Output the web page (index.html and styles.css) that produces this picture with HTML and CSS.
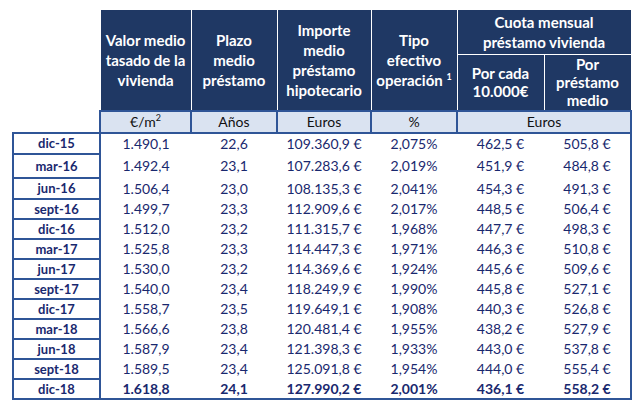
FILE: index.html
```html
<!DOCTYPE html>
<html lang="es">
<head>
<meta charset="utf-8">
<title>Préstamo vivienda</title>
<link rel="stylesheet" href="styles.css">
</head>
<body>
<table class="tbl">
  <colgroup>
    <col class="w-label"><col class="w1"><col class="w2"><col class="w3"><col class="w4"><col class="w5"><col class="w6">
  </colgroup>
  <thead>
    <tr class="hr1">
      <th class="corner" rowspan="2"></th>
      <th class="h" rowspan="2">Valor medio<br>tasado de la<br>vivienda</th>
      <th class="h" rowspan="2">Plazo<br>medio<br>préstamo</th>
      <th class="h" rowspan="2">Importe<br>medio<br>préstamo<br>hipotecario</th>
      <th class="h" rowspan="2">Tipo<br>efectivo<br>operación <sup class="note">1</sup></th>
      <th class="h" colspan="2">Cuota mensual<br>préstamo vivienda</th>
    </tr>
    <tr class="hr2">
      <th class="h sub">Por cada<br>10.000€</th>
      <th class="h sub">Por<br>préstamo<br>medio</th>
    </tr>
    <tr class="units">
      <td class="corner"></td>
      <td class="u">€/m<sup>2</sup></td>
      <td class="u">Años</td>
      <td class="u">Euros</td>
      <td class="u">%</td>
      <td class="u" colspan="2">Euros</td>
    </tr>
  </thead>
  <tbody>
    <tr class="r21"><th class="lbl">dic-15</th><td>1.490,1</td><td>22,6</td><td>109.360,9 €</td><td>2,075%</td><td>462,5 €</td><td class="last">505,8 €</td></tr>
    <tr class="r24"><th class="lbl">mar-16</th><td>1.492,4</td><td>23,1</td><td>107.283,6 €</td><td>2,019%</td><td>451,9 €</td><td class="last">484,8 €</td></tr>
    <tr class="r21"><th class="lbl">jun-16</th><td>1.506,4</td><td>23,0</td><td>108.135,3 €</td><td>2,041%</td><td>454,3 €</td><td class="last">491,3 €</td></tr>
    <tr><th class="lbl">sept-16</th><td>1.499,7</td><td>23,3</td><td>112.909,6 €</td><td>2,017%</td><td>448,5 €</td><td class="last">506,4 €</td></tr>
    <tr><th class="lbl">dic-16</th><td>1.512,0</td><td>23,2</td><td>111.315,7 €</td><td>1,968%</td><td>447,7 €</td><td class="last">498,3 €</td></tr>
    <tr><th class="lbl">mar-17</th><td>1.525,8</td><td>23,3</td><td>114.447,3 €</td><td>1,971%</td><td>446,3 €</td><td class="last">510,8 €</td></tr>
    <tr><th class="lbl">jun-17</th><td>1.530,0</td><td>23,2</td><td>114.369,6 €</td><td>1,924%</td><td>445,6 €</td><td class="last">509,6 €</td></tr>
    <tr><th class="lbl">sept-17</th><td>1.540,0</td><td>23,4</td><td>118.249,9 €</td><td>1,990%</td><td>445,8 €</td><td class="last">527,1 €</td></tr>
    <tr><th class="lbl">dic-17</th><td>1.558,7</td><td>23,5</td><td>119.649,1 €</td><td>1,908%</td><td>440,3 €</td><td class="last">526,8 €</td></tr>
    <tr><th class="lbl">mar-18</th><td>1.566,6</td><td>23,8</td><td>120.481,4 €</td><td>1,955%</td><td>438,2 €</td><td class="last">527,9 €</td></tr>
    <tr><th class="lbl">jun-18</th><td>1.587,9</td><td>23,4</td><td>121.398,3 €</td><td>1,933%</td><td>443,0 €</td><td class="last">537,8 €</td></tr>
    <tr><th class="lbl">sept-18</th><td>1.589,5</td><td>23,4</td><td>125.091,8 €</td><td>1,954%</td><td>444,0 €</td><td class="last">555,4 €</td></tr>
    <tr class="total"><th class="lbl">dic-18</th><td>1.618,8</td><td>24,1</td><td>127.990,2 €</td><td>2,001%</td><td>436,1 €</td><td class="last">558,2 €</td></tr>
  </tbody>
</table>
</body>
</html>
```

FILE: styles.css
```css
html, body {
  margin: 0;
  padding: 0;
  background: #ffffff;
}

body {
  padding: 9px 0 0 12px;
  font-family: Lato, "Open Sans", sans-serif;
  color: #19286e;
}

.tbl {
  border-collapse: collapse;
  table-layout: fixed;
  width: 618px;
}

.w-label { width: 87px; }
.w1 { width: 91px; }
.w2 { width: 86px; }
.w3 { width: 94px; }
.w4 { width: 86px; }
.w5 { width: 87px; }
.w6 { width: 87px; }

th, td {
  padding: 0;
  text-align: center;
  vertical-align: middle;
  white-space: nowrap;
}

.corner {
  border: none;
  background: transparent;
}

.h {
  background: #1f3864;
  color: #ffffff;
  font-weight: 700;
  font-size: 15px;
  line-height: 20px;
  border: 1px solid #ffffff;
}

.h.sub {
  line-height: 18px;
}

.hr1 { height: 45px; }
.hr2 { height: 56px; }

.note {
  font-size: 9px;
  vertical-align: 6px;
  line-height: 0;
}

.units { height: 22px; }

.u {
  background: #dae3f1;
  color: #111111;
  font-size: 14px;
  font-weight: 400;
  border: 2px solid #2f5597;
  line-height: 17px;
}

.u sup {
  font-size: 9px;
  line-height: 0;
  vertical-align: 6px;
}

tbody tr { height: 20px; }
tbody tr.r21 { height: 21px; }
tbody tr.r24 { height: 24px; }

tbody td {
  font-size: 14px;
  line-height: 17px;
}

.lbl {
  border: 2px solid #2f5597;
  font-size: 13px;
  font-weight: 700;
  line-height: 16px;
}

.last {
  border-right: 2px solid #2f5597;
}

.total td {
  font-weight: 700;
  border-bottom: 2px solid #2f5597;
}
```
